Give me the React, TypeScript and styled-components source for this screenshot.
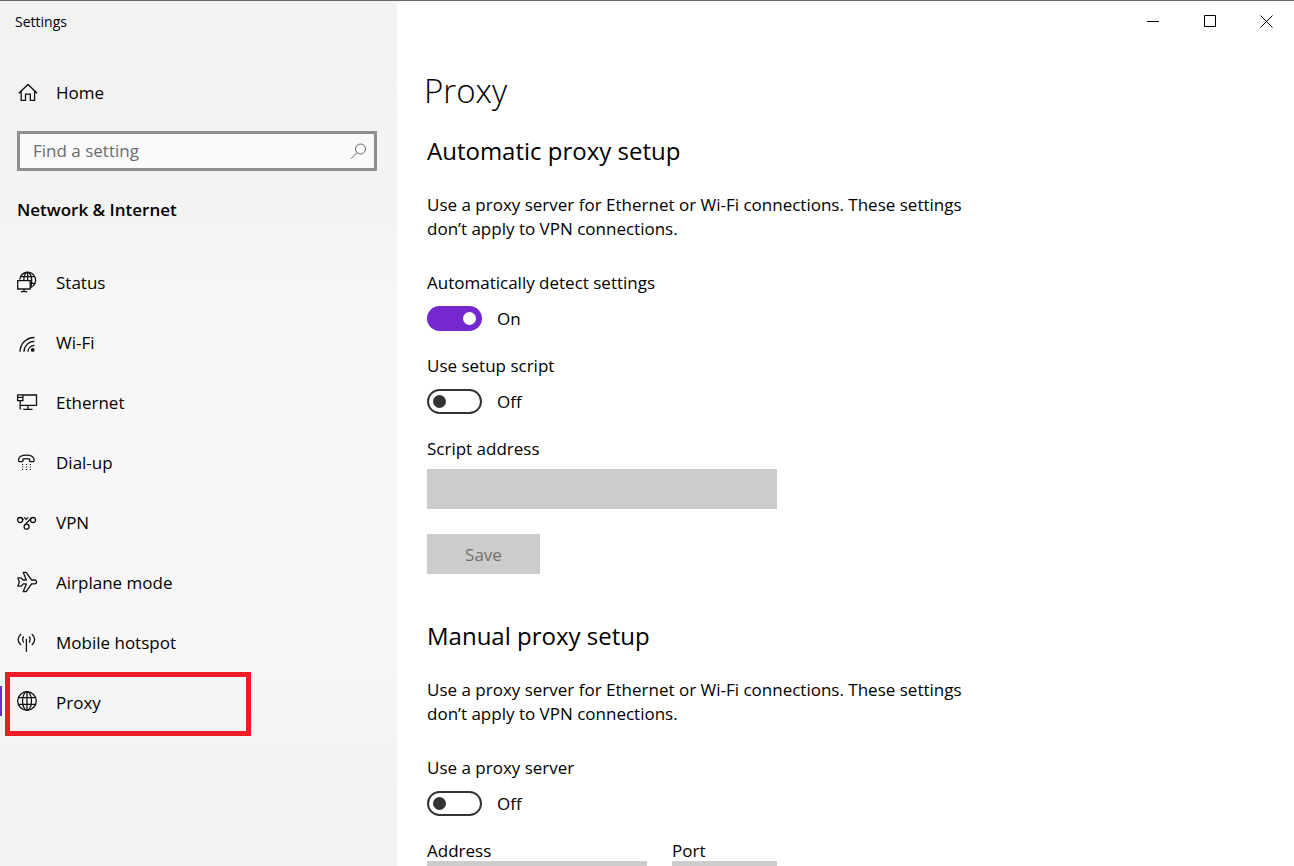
import React, { useState } from "react";
import styled, { createGlobalStyle } from "styled-components";

const GlobalStyle = createGlobalStyle`
  *, *::before, *::after { box-sizing: border-box; }
  body {
    margin: 0;
    background: #fff;
    color: #000;
    font: 17px/24px "Open Sans", "Segoe UI", sans-serif;
  }
  button, input { font: inherit; color: inherit; }
  h1, h2, p { margin: 0; }
`;

const Window = styled.div`
  display: grid;
  grid-template-columns: 397px 1fr;
  height: 100vh;
  overflow: hidden;
  border-top: 1px solid #666;
`;

const Sidebar = styled.aside`
  background: linear-gradient(#f2f2f1 0%, #f3f3f2 24%, #f7f7f7 36%, #f7f7f7 74%, #f2f2f0 92%);
`;

const AppTitle = styled.div`
  padding-left: 15px;
  font-size: 14px;
  line-height: 42px;
`;

const HomeLink = styled.a`
  display: flex;
  align-items: center;
  gap: 19px;
  height: 60px;
  margin-top: 20px;
  padding-left: 17px;
  color: inherit;
  text-decoration: none;
`;

const SearchBox = styled.label`
  display: flex;
  align-items: center;
  height: 40px;
  margin: 8px 20px 0 17px;
  padding: 0 7px 0 13px;
  border: 3px solid #8f8f8f;
  background: #fafafa;
`;

const SearchInput = styled.input`
  flex: 1;
  min-width: 0;
  padding: 0;
  border: 0;
  outline: 0;
  background: transparent;
  &::placeholder { color: #6b6b6b; opacity: 1; }
`;

const SidebarHeading = styled.h2`
  margin-top: 19px;
  padding-left: 17px;
  font-size: 17px;
  font-weight: 600;
  line-height: 40px;
`;

const Nav = styled.nav`
  display: flex;
  flex-direction: column;
  margin-top: 23px;
`;

const NavLink = styled.a<{ $current: boolean }>`
  position: relative;
  display: flex;
  align-items: center;
  gap: 19px;
  height: 60px;
  padding-left: 17px;
  color: inherit;
  text-decoration: none;
  &::before {
    content: "";
    display: ${(p) => (p.$current ? "block" : "none")};
    position: absolute;
    left: 0;
    top: 13px;
    width: 2px;
    height: 30px;
    background: #7628d0;
  }
`;

const Highlight = styled.span`
  position: absolute;
  left: 5px;
  top: -1px;
  width: 246px;
  height: 64px;
  border: 5px solid #ee1c25;
`;

const Icon = styled.svg`
  flex: none;
  width: 20px;
  height: 24px;
  overflow: visible;
  fill: none;
  stroke: #111;
  stroke-width: 1.3;
`;

const Main = styled.main`
  min-width: 0;
  overflow: hidden;
`;

const TitleBar = styled.div`
  display: flex;
  justify-content: flex-end;
  height: 40px;
`;

const CaptionButton = styled.button`
  display: grid;
  place-items: center;
  width: 57px;
  height: 40px;
  padding: 0;
  border: 0;
  background: transparent;
  &:last-child { width: 55px; }
`;

const CaptionIcon = styled.svg`
  width: 13px;
  height: 13px;
  fill: none;
  stroke: #000;
`;

const Content = styled.div`
  padding: 28px 30px 0;
`;

const PageTitle = styled.h1`
  font-size: 33px;
  font-weight: 300;
  line-height: 44px;
  margin-left: -3px;
`;

const Section = styled.section`
  max-width: 540px;
  margin-top: 23px;
  & + & { margin-top: 47px; }
`;

const SectionTitle = styled.h2`
  font-size: 24px;
  font-weight: 400;
  line-height: 30px;
`;

const Description = styled.p`
  margin-top: 27px;
`;

const Setting = styled.div<{ $gap: number }>`
  margin-top: ${(p) => p.$gap}px;
`;

const Label = styled.label`
  display: block;
`;

const SwitchRow = styled.div`
  display: flex;
  align-items: center;
  gap: 15px;
  height: 25px;
  margin-top: 11px;
`;

const Switch = styled.input`
  appearance: none;
  display: flex;
  align-items: center;
  width: 55px;
  height: 25px;
  margin: 0;
  padding: 0 4px;
  border: 2px solid #333;
  border-radius: 13px;
  background: #fff;
  &::before {
    content: "";
    width: 13px;
    height: 13px;
    border-radius: 50%;
    background: #333;
  }
  &:checked {
    justify-content: flex-end;
    border-color: #7628d0;
    background: #7628d0;
  }
  &:checked::before { background: #fff; }
`;

const TextBox = styled.input`
  display: block;
  width: 100%;
  height: 40px;
  padding: 0 12px;
  border: 0;
  background: #ccc;
`;

const ScriptField = styled.div`
  display: grid;
  gap: 8px;
  width: 350px;
  margin-top: 23px;
`;

const SaveButton = styled.button`
  width: 113px;
  height: 40px;
  margin-top: 25px;
  padding: 2px 0 0;
  border: 0;
  background: #ccc;
  &:disabled { color: #707070; }
`;

const FieldRow = styled.div`
  display: grid;
  grid-template-columns: 220px 105px;
  gap: 25px;
  margin-top: 25px;
  line-height: 20px;
`;

const icons = {
  home: (
    <path d="M1.8 12.3 11 3.5l9.2 8.8M4.2 10.4v8.9h4.3v-6.2h4.8v6.2h4.3v-8.9" />
  ),
  status: (
    <>
      <path d="M2.7 8.6A8 8 0 1 1 13.8 16.6" />
      <path d="M6.8 9C7 4.5 8.7 1.4 10.7 1.4s4 3.4 4 8c0 2.800-.4 5.200-1.200 7M3.800 5.700h13.800M13 12.300h5" />
      <path d="M10.700 1.400V9" />
      <path d="M.7 9.700h12.500v8.300H.7zM7 18v2.600M3.800 20.700h6.400" />
    </>
  ),
  wifi: (
    <>
      <path d="M3 20.700A14.300 14.300 0 0 1 17.500 6.500M7 20.700A10.300 10.300 0 0 1 17.500 10.400M11 20.700a6.400 6.400 0 0 1 6.500-6.400" />
      <circle cx="15.700" cy="18.900" r="1.900" fill="#111" stroke="none" />
    </>
  ),
  ethernet: (
    <>
      <path d="M6 4h13.500v10.400H3M10.900 14.400v3.700M6.300 18.300h9.200" />
      <path d="M.6 3.900h5.300v5.800H.6zM.6 6.300h5.300M3.200 9.700v8.900" />
    </>
  ),
  dialup: (
    <>
      <path d="M1.600 9.700V8.300C2.400 2.800 16.300 2.800 17 8.300v1.400q0 1-1 1h-2.400q-1 0-1-1V8.200q-3.300-1-6.600 0v1.500q0 1-1 1H2.600q-1 0-1-1z" />
      <path
        strokeWidth="1.100"
        strokeDasharray="1.200 2.700"
        d="M5 13.500h9.200M5 16h9.200M5 18.500h9.200"
      />
    </>
  ),
  vpn: (
    <>
      <circle cx="3.100" cy="9" r="2.500" />
      <circle cx="16" cy="9" r="2.500" />
      <circle cx="9.600" cy="15.700" r="2.500" />
      <path d="M4.600 6.900 6.600 9M7.200 6.400l2 2 2-2M14.200 7.200 7.600 14.100" />
    </>
  ),
  airplane: (
    <path
      strokeLinejoin="round"
      d="M6.300 9 4 6.900H.9L2.300 11 .9 15.200H4l2.300-2.300h3L6.200 20.700h2.900l5.500-7.800h3.200q1.800-.3 1.800-1.900T17.800 9h-3.200L9.100 1.300H6.200L9.300 9z"
    />
  ),
  hotspot: (
    <>
      <path d="M9.400 7.800v13" />
      <path d="M6.700 5.500q-2.200 3 0 6M4 3Q-1.800 8.500 4 14M12.100 5.500q2.200 3 0 6M14.800 3q5.800 5.500 0 11" />
    </>
  ),
  proxy: (
    <>
      <circle cx="10" cy="10" r="9.300" />
      <ellipse cx="10" cy="10" rx="4.500" ry="9.300" />
      <path d="M10 .7v18.600M1.400 6.700h17.200M1.400 13.300h17.200" />
    </>
  ),
};

type IconName = keyof typeof icons;

const Glyph = ({ name }: { name: IconName }) => (
  <Icon viewBox="0 0 20 24" aria-hidden="true">
    {icons[name]}
  </Icon>
);

const navItems: { icon: IconName; label: string }[] = [
  { icon: "status", label: "Status" },
  { icon: "wifi", label: "Wi-Fi" },
  { icon: "ethernet", label: "Ethernet" },
  { icon: "dialup", label: "Dial-up" },
  { icon: "vpn", label: "VPN" },
  { icon: "airplane", label: "Airplane mode" },
  { icon: "hotspot", label: "Mobile hotspot" },
  { icon: "proxy", label: "Proxy" },
];

function SwitchSetting(props: { id: string; label: string; gap: number; initial?: boolean }) {
  const [on, setOn] = useState(props.initial ?? false);
  return (
    <Setting $gap={props.gap}>
      <Label htmlFor={props.id}>{props.label}</Label>
      <SwitchRow>
        <Switch
          id={props.id}
          type="checkbox"
          role="switch"
          checked={on}
          onChange={(e) => setOn(e.target.checked)}
        />
        <span>{on ? "On" : "Off"}</span>
      </SwitchRow>
    </Setting>
  );
}

export default function App() {
  return (
    <>
      <GlobalStyle />
      <Window>
        <Sidebar>
          <AppTitle>Settings</AppTitle>
          <HomeLink href="#home">
            <Glyph name="home" />
            Home
          </HomeLink>
          <SearchBox>
            <SearchInput type="text" placeholder="Find a setting" aria-label="Find a setting" />
            <svg width="17" height="17" viewBox="0 0 17 17" fill="none" stroke="#666" aria-hidden="true">
              <circle cx="10.500" cy="6" r="5" />
              <path d="M7 9.700 1 15.700" />
            </svg>
          </SearchBox>
          <SidebarHeading>Network &amp; Internet</SidebarHeading>
          <Nav>
            {navItems.map(({ icon, label }) => (
              <NavLink
                key={icon}
                href={`#${icon}`}
                $current={icon === "proxy"}
                aria-current={icon === "proxy" ? "page" : undefined}
              >
                <Glyph name={icon} />
                {label}
                {icon === "proxy" && <Highlight />}
              </NavLink>
            ))}
          </Nav>
        </Sidebar>
        <Main>
          <TitleBar>
            <CaptionButton aria-label="Minimize">
              <CaptionIcon viewBox="0 0 13 13"><path d="M0 6.500h12" /></CaptionIcon>
            </CaptionButton>
            <CaptionButton aria-label="Maximize">
              <CaptionIcon viewBox="0 0 13 13"><path d="M.5.5h11v11H.5z" /></CaptionIcon>
            </CaptionButton>
            <CaptionButton aria-label="Close">
              <CaptionIcon viewBox="0 0 13 13"><path d="m.5.500 12 12m0-12-12 12" /></CaptionIcon>
            </CaptionButton>
          </TitleBar>
          <Content>
            <PageTitle>Proxy</PageTitle>
            <Section>
              <SectionTitle>Automatic proxy setup</SectionTitle>
              <Description>
                Use a proxy server for Ethernet or Wi-Fi connections. These settings don’t apply to VPN
                connections.
              </Description>
              <SwitchSetting id="detect" label="Automatically detect settings" gap={30} initial />
              <SwitchSetting id="script" label="Use setup script" gap={23} />
              <ScriptField>
                <Label htmlFor="script-address">Script address</Label>
                <TextBox id="script-address" type="text" disabled />
              </ScriptField>
              <SaveButton disabled>Save</SaveButton>
            </Section>
            <Section>
              <SectionTitle>Manual proxy setup</SectionTitle>
              <Description>
                Use a proxy server for Ethernet or Wi-Fi connections. These settings don’t apply to VPN
                connections.
              </Description>
              <SwitchSetting id="manual" label="Use a proxy server" gap={30} />
              <FieldRow>
                <div>
                  <Label htmlFor="address">Address</Label>
                  <TextBox id="address" type="text" disabled />
                </div>
                <div>
                  <Label htmlFor="port">Port</Label>
                  <TextBox id="port" type="text" disabled />
                </div>
              </FieldRow>
            </Section>
          </Content>
        </Main>
      </Window>
    </>
  );
}
